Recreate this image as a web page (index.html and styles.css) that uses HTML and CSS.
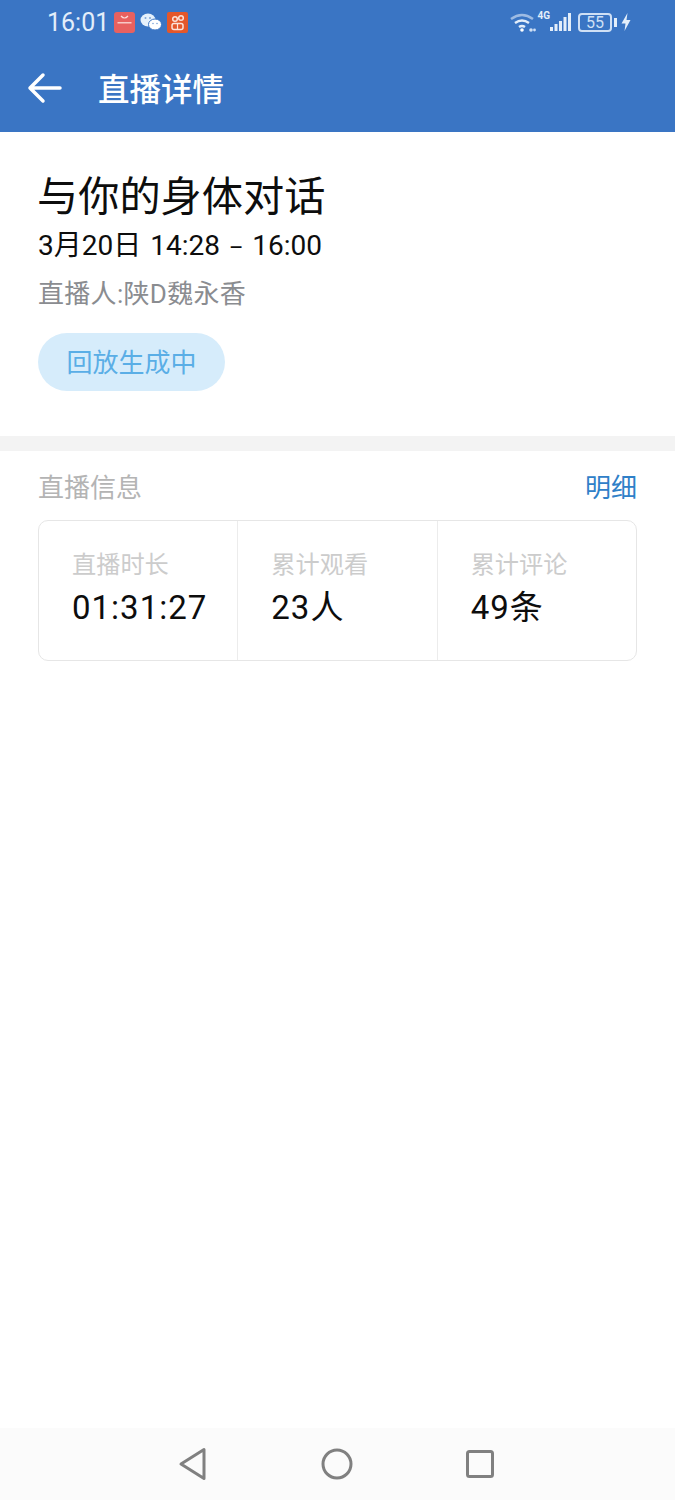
FILE: index.html
```html
<!DOCTYPE html>
<html lang="zh-CN">
<head>
    <meta charset="UTF-8">
    <title>直播详情</title>
    <link rel="stylesheet" href="styles.css">
</head>
<body>
    <div class="top-bar">
        <div class="status-bar">
            <div class="status-left">
                <span class="clock">16:01</span>
                <svg class="app-icon" width="21" height="21" viewBox="0 0 21 21">
                    <rect width="21" height="21" rx="3" fill="#e8615f"/>
                    <path d="M7 4q3.500 4 7 0" fill="none" stroke="#fbdcda" stroke-width="1.200"/>
                    <rect x="3.500" y="10" width="14" height="1.500" fill="#f7c9c6"/>
                </svg>
                <svg class="app-icon" width="22" height="20" viewBox="0 0 22 20">
                    <ellipse cx="8" cy="8" rx="7.500" ry="6.500" fill="#e6f1fb"/>
                    <ellipse cx="15" cy="12.500" rx="6.500" ry="5.500" fill="#fff" stroke="#3a75c4" stroke-width="1"/>
                    <circle cx="5.500" cy="6" r="1" fill="#7fa5d8"/>
                    <circle cx="10" cy="6" r="1" fill="#7fa5d8"/>
                    <circle cx="13" cy="11.500" r="0.800" fill="#7fa5d8"/>
                    <circle cx="17" cy="11.500" r="0.800" fill="#7fa5d8"/>
                </svg>
                <svg class="app-icon" width="21" height="21" viewBox="0 0 21 21">
                    <rect width="21" height="21" rx="2" fill="#e4572a"/>
                    <circle cx="8" cy="7" r="2.300" fill="none" stroke="#fbe3da" stroke-width="1.500"/>
                    <circle cx="14" cy="6" r="2.300" fill="none" stroke="#fbe3da" stroke-width="1.500"/>
                    <rect x="5" y="11.500" width="11" height="6" rx="2" fill="none" stroke="#fbe3da" stroke-width="1.500"/>
                    <path d="M10.500 11.500V17.500" stroke="#fbe3da" stroke-width="1.200"/>
                </svg>
            </div>
            <div class="status-right">
                <svg width="28" height="22" viewBox="0 0 28 22" fill="none" stroke-width="2.500">
                    <path d="M2 8q11-8 22 0" stroke="#9dbbe3"/>
                    <path d="M6 12q7-5 14 0" stroke="#e3eefa"/>
                    <path d="M10 16q3-2 6 0" stroke="#e3eefa"/>
                    <circle cx="13" cy="19" r="1.800" fill="#fff" stroke="none"/>
                    <circle cx="22" cy="19" r="1.800" fill="#cfe0f5" stroke="none"/>
                    <circle cx="25.500" cy="19" r="1.400" fill="#cfe0f5" stroke="none"/>
                </svg>
                <span class="net-type">4G</span>
                <svg class="signal" width="21" height="20" viewBox="0 0 21 20" fill="#e3eefa">
                    <rect x="0" y="15" width="3" height="4"/>
                    <rect x="4.500" y="12" width="3" height="7"/>
                    <rect x="9" y="9" width="3" height="10"/>
                    <rect x="13.500" y="5" width="3" height="14"/>
                    <rect x="18" y="1" width="3" height="18"/>
                </svg>
                <span class="battery">55</span>
                <span class="battery-cap"></span>
                <svg width="10" height="18" viewBox="0 0 10 18"><path d="M6.500 0L0.500 10.500H4.500L3.500 18L9.500 7H5.500Z" fill="#e3eefa"/></svg>
            </div>
        </div>
        <div class="nav-bar">
            <svg class="back-icon" width="36" height="32" viewBox="0 0 36 32" fill="none" stroke="#fff" stroke-width="3.500" stroke-linecap="round" stroke-linejoin="round">
                <path d="M16 3L3 16L16 29M3 16H33"/>
            </svg>
            <span class="nav-title">直播详情</span>
        </div>
    </div>

    <div class="live-card">
        <div class="live-title">与你的身体对话</div>
        <div class="live-time">3月20日 14:28<span class="dash">–</span>16:00</div>
        <div class="live-host">直播人:陕D魏永香</div>
        <div class="replay-pill">回放生成中</div>
    </div>

    <div class="info-section">
        <div class="info-head">
            <span class="info-label">直播信息</span>
            <span class="info-link">明细</span>
        </div>
        <div class="stats">
            <div class="stat">
                <div class="stat-name">直播时长</div>
                <div class="stat-value">01:31:27</div>
            </div>
            <div class="stat">
                <div class="stat-name">累计观看</div>
                <div class="stat-value">23人</div>
            </div>
            <div class="stat">
                <div class="stat-name">累计评论</div>
                <div class="stat-value">49条</div>
            </div>
        </div>
    </div>

    <div class="bottom-nav">
        <svg width="30" height="34" viewBox="0 0 30 34" fill="none" stroke="#808080" stroke-width="3" stroke-linejoin="round">
            <path d="M26 2.500V31.500L3 17Z"/>
        </svg>
        <svg width="32" height="32" viewBox="0 0 32 32" fill="none" stroke="#808080" stroke-width="3">
            <circle cx="16" cy="16" r="14"/>
        </svg>
        <svg class="recent-btn" width="30" height="30" viewBox="0 0 30 30" fill="none" stroke="#808080" stroke-width="3" stroke-linejoin="round">
            <rect x="2.500" y="2.500" width="25" height="25" rx="2"/>
        </svg>
    </div>
</body>
</html>
```
FILE: styles.css
```css
body {
    display: flex;
    flex-direction: column;
    height: 1500px;
    margin: 0;
    overflow: hidden;
    background: white;
    font-family: "Roboto", "Noto Sans CJK SC", sans-serif;
}

.top-bar {
    height: 132px;
    background: #3a75c4;
    color: white;
    flex-shrink: 0;
}
.status-bar {
    height: 44px;
    display: flex;
    justify-content: space-between;
    align-items: center;
    padding: 0 44px 0 47px;
}
.status-left, .status-right {
    display: flex;
    align-items: center;
}
.clock {
    font-size: 25px;
    color: #e3eefa;
    margin-right: 5px;
}
.app-icon {
    margin-right: 5px;
}
.net-type {
    font-size: 10px;
    line-height: 10px;
    font-weight: bold;
    color: #e3eefa;
    align-self: flex-start;
}
.signal {
    margin-right: 7px;
}
.battery {
    width: 30px;
    height: 15px;
    border: 2px solid #cfe0f5;
    border-radius: 4px;
    font-size: 16px;
    line-height: 15px;
    text-align: center;
    color: #cfe0f5;
    margin-right: 2px;
}
.battery-cap {
    width: 3px;
    height: 9px;
    background: #e3eefa;
    margin-right: 4px;
}

.nav-bar {
    height: 88px;
    display: flex;
    align-items: center;
    padding-left: 27px;
}
.back-icon {
    margin-right: 35px;
}
.nav-title {
    font-size: 31.5px;
    font-weight: 500;
    margin-bottom: 3px;
}

.live-card {
    height: 304px;
    padding: 0 38px;
    box-sizing: border-box;
    flex-shrink: 0;
}
.live-title {
    font-size: 41.2px;
    line-height: 48px;
    margin: 41px 0 0 -1px;
    color: #0d0d0d;
}
.live-time {
    height: 36px;
    font-size: 28px;
    word-spacing: 2px;
    line-height: 36px;
    margin-top: 7px;
    color: #0d0d0d;
}
.dash {
    font-size: 22px;
    margin: 0 9px;
}
.live-host {
    font-size: 26px;
    letter-spacing: 0.3px;
    line-height: 36px;
    margin-top: 12px;
    color: #8a8c90;
}
.replay-pill {
    width: 187px;
    height: 58px;
    line-height: 61px;
    margin-top: 21px;
    border-radius: 29px;
    background: #d6ecfb;
    color: #5aaee6;
    font-size: 26px;
    text-align: center;
}

.info-section {
    flex-grow: 1;
    border-top: 15px solid #f3f3f3;
    padding: 0 38px;
}
.info-head {
    display: flex;
    justify-content: space-between;
    align-items: center;
    height: 69px;
    font-size: 26px;
}
.info-label {
    color: #b4b4b4;
}
.info-link {
    color: #2f80c8;
}
.stats {
    display: flex;
    height: 141px;
    box-sizing: border-box;
    border: 1px solid #e6e6e6;
    border-radius: 10px;
}
.stat {
    flex: 1;
    padding: 27px 0 0 33px;
    border-left: 1px solid #ececec;
}
.stat:first-child {
    border-left: 0;
}
.stat-name {
    font-size: 24.2px;
    line-height: 34px;
    color: #cccccc;
}
.stat-value {
    font-size: 33px;
    letter-spacing: 1px;
    line-height: 44px;
    margin-top: 4px;
    color: #0d0d0d;
}

.bottom-nav {
    height: 72px;
    flex-shrink: 0;
    background: #fbfbfb;
    display: flex;
    align-items: center;
    justify-content: center;
    gap: 113px;
    padding-right: 3px;
}
.recent-btn {
    margin-left: -1px;
}
```
